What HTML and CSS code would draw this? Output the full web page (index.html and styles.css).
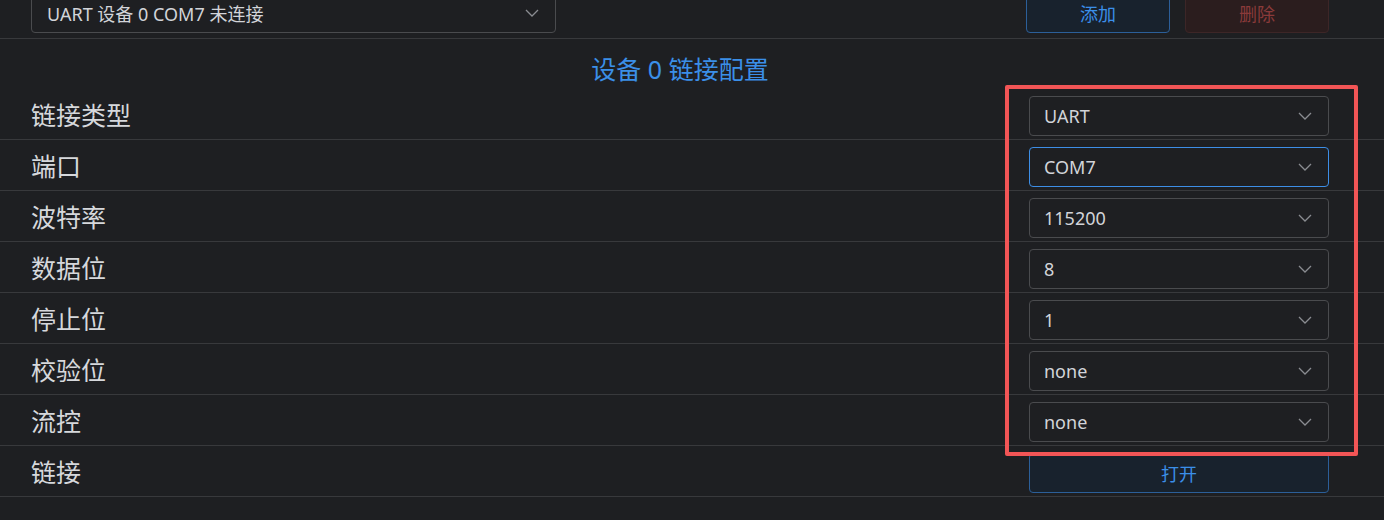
FILE: index.html
```html
<!DOCTYPE html>
<html lang="zh">
<head>
<meta charset="utf-8">
<title>设备链接配置</title>
<link rel="stylesheet" href="styles.css">
</head>
<body>
<div class="page">
  <div class="topbar">
    <div class="select select-wide"><span>UART 设备 0 COM7 未连接</span><svg class="chev" viewBox="0 0 14 8"><path d="M1 1 L7 7 L13 1"/></svg></div>
    <div class="btn-group">
      <div class="btn btn-primary">添加</div>
      <div class="btn btn-danger-disabled">删除</div>
    </div>
  </div>
  <div class="title">设备 0 链接配置</div>
  <div class="rows">
    <div class="row first"><div class="label">链接类型</div><div class="select"><span>UART</span><svg class="chev" viewBox="0 0 14 8"><path d="M1 1 L7 7 L13 1"/></svg></div></div>
    <div class="row"><div class="label">端口</div><div class="select focused"><span>COM7</span><svg class="chev" viewBox="0 0 14 8"><path d="M1 1 L7 7 L13 1"/></svg></div></div>
    <div class="row"><div class="label">波特率</div><div class="select"><span>115200</span><svg class="chev" viewBox="0 0 14 8"><path d="M1 1 L7 7 L13 1"/></svg></div></div>
    <div class="row"><div class="label">数据位</div><div class="select"><span>8</span><svg class="chev" viewBox="0 0 14 8"><path d="M1 1 L7 7 L13 1"/></svg></div></div>
    <div class="row"><div class="label">停止位</div><div class="select"><span>1</span><svg class="chev" viewBox="0 0 14 8"><path d="M1 1 L7 7 L13 1"/></svg></div></div>
    <div class="row"><div class="label">校验位</div><div class="select"><span>none</span><svg class="chev" viewBox="0 0 14 8"><path d="M1 1 L7 7 L13 1"/></svg></div></div>
    <div class="row"><div class="label">流控</div><div class="select"><span>none</span><svg class="chev" viewBox="0 0 14 8"><path d="M1 1 L7 7 L13 1"/></svg></div></div>
    <div class="row"><div class="label">链接</div><div class="btn btn-primary btn-open">打开</div></div>
  </div>
  <div class="highlight"></div>
</div>
</body>
</html>
```
FILE: styles.css
```css
html, body {
  margin: 0;
  padding: 0;
  background: #1e1f22;
  overflow: hidden;
}
body {
  font-family: "Noto Sans", "Noto Sans CJK SC", sans-serif;
  color: #d4d6db;
}
.page {
  position: relative;
  width: 1384px;
  height: 520px;
}
.topbar {
  height: 39px;
  box-sizing: border-box;
  padding: 0 55px 5px 31px;
  border-bottom: 1px solid #38393c;
  display: flex;
  align-items: flex-end;
  justify-content: space-between;
}
.select {
  box-sizing: border-box;
  height: 40px;
  width: 300px;
  border: 1px solid #4a4b4e;
  border-radius: 4px;
  display: flex;
  align-items: center;
  justify-content: space-between;
  padding: 0 16px 0 14px;
  font-size: 18px;
  color: #d2d4d9;
  flex-shrink: 0;
}
.select-wide {
  width: 525px;
  padding-left: 15px;
}
.select.focused {
  border-color: #3d8ee6;
}
.chev {
  width: 14px;
  height: 8px;
  fill: none;
  stroke: #8a8c91;
  stroke-width: 1.3;
}
.btn-group {
  display: flex;
  gap: 15px;
}
.btn {
  box-sizing: border-box;
  height: 40px;
  width: 144px;
  border-radius: 4px;
  display: flex;
  align-items: center;
  justify-content: center;
  font-size: 18px;
}
.btn-primary {
  background: #18222d;
  border: 1px solid #2c5f99;
  color: #3b8fe8;
}
.btn-danger-disabled {
  background: #2b1d1e;
  border: 1px solid #3d2627;
  color: #8a3a3a;
}
.title {
  height: 50px;
  box-sizing: border-box;
  padding: 17px 24px 0 0;
  line-height: 27px;
  text-align: center;
  font-size: 25px;
  color: #3b8fe8;
}
.row {
  height: 51px;
  box-sizing: border-box;
  padding: 7px 55px 3px 31px;
  border-bottom: 1px solid #38393c;
  display: flex;
  align-items: center;
  justify-content: space-between;
}
.label {
  font-size: 25px;
  color: #d6d8dc;
  margin-bottom: 4px;
}
.btn-open {
  width: 300px;
}
.highlight {
  position: absolute;
  left: 1005px;
  top: 85px;
  width: 353px;
  height: 371px;
  box-sizing: border-box;
  border: 4px solid #f25556;
  border-radius: 2px;
  pointer-events: none;
}
```
